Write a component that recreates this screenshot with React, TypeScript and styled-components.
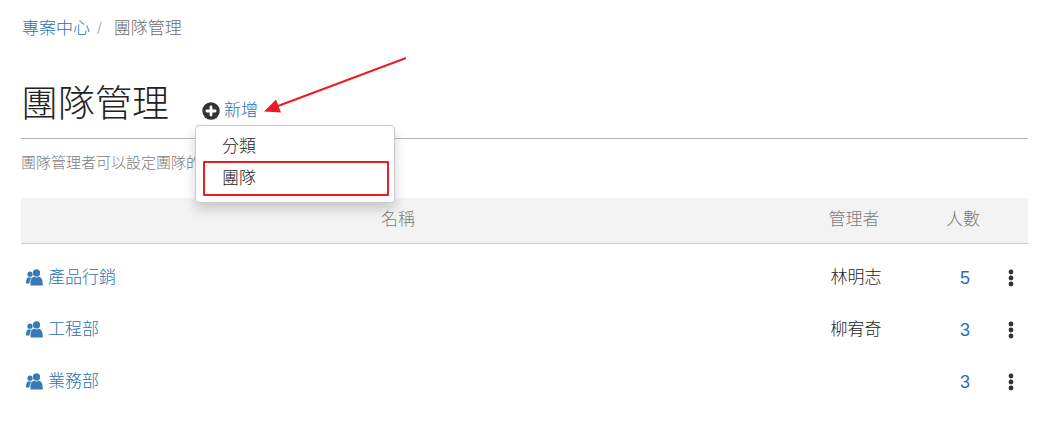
import React from 'react';
import styled, { createGlobalStyle } from 'styled-components';

const GlobalStyle = createGlobalStyle`
  * { box-sizing: border-box; }
  body {
    margin: 0;
    background: #fff;
    color: #222;
    font: 300 17px/24px "Liberation Sans", "Noto Sans CJK TC", sans-serif;
  }
`;

const Page = styled.main`
  padding: 17px 19px 24px 21px;
`;

const Link = styled.a`
  color: #2b70b0;
  text-decoration: none;
`;

const Breadcrumb = styled.nav`
  display: flex;
  color: #6c6c6c;
  padding-left: 1px;
`;

const Divider = styled.span`
  color: #bbb;
  padding: 0 12px 0 7px;
`;

const Header = styled.header`
  display: flex;
  align-items: flex-end;
  gap: 32px;
  height: 98px;
  padding: 0 0 6px;
  border-bottom: 1px solid #b5b5b5;
`;

const Title = styled.h1`
  margin: 0;
  font-size: 37px;
  font-weight: 300;
  line-height: 54px;
`;

const AddArea = styled.div`
  position: relative;
  padding: 0 0 9px 1px;
`;

const AddButton = styled.button`
  display: flex;
  align-items: center;
  gap: 4px;
  padding: 0;
  border: 0;
  background: none;
  color: #2b70b0;
  font: inherit;
  cursor: pointer;
`;

const Menu = styled.ul`
  position: absolute;
  z-index: 1;
  top: 26px;
  left: -6px;
  width: 200px;
  margin: 0;
  padding: 6px 5px 6px 7px;
  list-style: none;
  background: #fff;
  border: 1px solid #ccc;
  border-radius: 4px;
  box-shadow: 0 6px 12px rgba(0, 0, 0, 0.18);
`;

const MenuItem = styled.button<{ $marked?: boolean }>`
  display: block;
  width: 100%;
  height: ${({ $marked }) => ($marked ? 35 : 29)}px;
  padding: 0 17px;
  border: 2px solid ${({ $marked }) => ($marked ? '#ed1c24' : 'transparent')};
  border-radius: 1px;
  background: none;
  color: #222;
  font: inherit;
  text-align: left;
  cursor: pointer;
`;

const Arrow = styled.svg`
  position: absolute;
  left: 63px;
  top: -43px;
  pointer-events: none;
`;

const Hint = styled.p`
  margin: 12px 0 23px;
  color: #7c7c7c;
  font-size: 15px;
`;

const Table = styled.table`
  width: 100%;
  table-layout: fixed;
  border-collapse: separate;
  border-spacing: 0;
`;

const HeadCell = styled.th<{ $width?: number }>`
  width: ${({ $width }) => ($width ? `${$width}px` : 'auto')};
  height: 46px;
  padding: 0 0 2px;
  background: #f3f3f3;
  border-bottom: 1px solid #ccc;
  color: #7c7c7c;
  font-weight: 300;
  text-align: center;
`;

const Body = styled.tbody`
  &::before {
    content: "";
    display: block;
    height: 8px;
  }
`;

const Cell = styled.td<{ $center?: boolean }>`
  height: 52px;
  padding: 0 0 0 4px;
  text-align: ${({ $center }) => ($center ? 'center' : 'left')};
`;

const ActionCell = styled.td`
  padding: 2px 0 0;
`;

const TeamLink = styled(Link)`
  display: flex;
  align-items: center;
  gap: 5px;
`;

const Count = styled(Link)`
  font-size: 18px;
`;

const MoreButton = styled.button`
  display: block;
  margin: 0 auto;
  padding: 0;
  border: 0;
  background: none;
  color: #333;
  cursor: pointer;
`;

const PlusIcon = () => (
  <svg width="18" height="18" viewBox="0 0 18 18" aria-hidden="true">
    <circle cx="9" cy="9" r="8.7" fill="#333" />
    <path d="M9 4.9v8.2M4.9 9h8.2" stroke="#fff" strokeWidth="2.8" strokeLinecap="round" />
  </svg>
);

const TeamIcon = () => (
  <svg width="18" height="18" viewBox="0 1 18 18" fill="#337ab7" aria-hidden="true">
    <circle cx="11.5" cy="4.9" r="3.6" />
    <path d="M5.5 17.5v-2.2C5.5 11.3 7.2 9 9.2 8.8q2.3 1.2 4.6 0c2.3.3 3.9 2.6 3.9 6.5v2.2z" />
    <circle cx="5" cy="6.2" r="2.6" />
    <path d="M1 15.4c0-3.7.9-5.8 2.5-6.2q1.5.8 3 .2l.4.3C5.4 11 4.7 12.5 4.5 15.4z" />
  </svg>
);

const DotsIcon = () => (
  <svg width="6" height="18" viewBox="0 0 6 18" fill="currentColor" aria-hidden="true">
    <circle cx="3" cy="3" r="2.4" />
    <circle cx="3" cy="9" r="2.4" />
    <circle cx="3" cy="15" r="2.4" />
  </svg>
);

const teams = [
  { name: '產品行銷', manager: '林明志', count: 5 },
  { name: '工程部', manager: '柳宥奇', count: 3 },
  { name: '業務部', manager: '', count: 3 },
];

export default function App() {
  return (
    <Page>
      <GlobalStyle />
      <Breadcrumb>
        <Link href="#">專案中心</Link>
        <Divider>/</Divider>
        <span>團隊管理</span>
      </Breadcrumb>
      <Header>
        <Title>團隊管理</Title>
        <AddArea>
          <AddButton type="button" aria-haspopup="true" aria-expanded="true">
            <PlusIcon />
            新增
          </AddButton>
          <Menu>
            <li><MenuItem type="button">分類</MenuItem></li>
            <li><MenuItem type="button" $marked>團隊</MenuItem></li>
          </Menu>
          <Arrow width="146" height="58" viewBox="0 0 146 58" aria-hidden="true">
            <path d="M142 2L14 50" stroke="#ed1c24" strokeWidth="2" />
            <path d="M0 55.5L12 43.5L17 56.5Z" fill="#ed1c24" />
          </Arrow>
        </AddArea>
      </Header>
      <Hint>團隊管理者可以設定團隊的</Hint>
      <Table>
        <thead>
          <tr>
            <HeadCell scope="col">名稱</HeadCell>
            <HeadCell scope="col" $width={158}>管理者</HeadCell>
            <HeadCell scope="col" $width={60}>人數</HeadCell>
            <HeadCell $width={35} />
          </tr>
        </thead>
        <Body>
          {teams.map(({ name, manager, count }) => (
            <tr key={name}>
              <Cell><TeamLink href="#"><TeamIcon />{name}</TeamLink></Cell>
              <Cell $center>{manager}</Cell>
              <Cell $center><Count href="#">{count}</Count></Cell>
              <ActionCell>
                <MoreButton type="button" aria-label={`${name} 選項`}><DotsIcon /></MoreButton>
              </ActionCell>
            </tr>
          ))}
        </Body>
      </Table>
    </Page>
  );
}
